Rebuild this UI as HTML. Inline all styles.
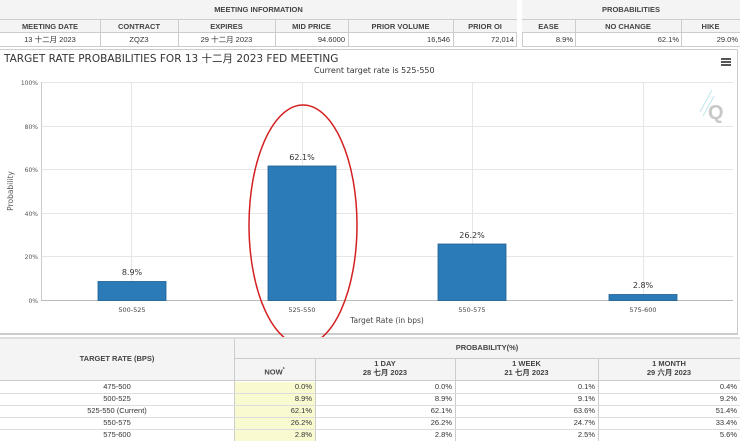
<!DOCTYPE html>
<html><head><meta charset="utf-8"><style>
*{margin:0;padding:0;box-sizing:border-box}
body{width:740px;height:441px;overflow:hidden;background:#fff;font-family:"Liberation Sans","Noto Sans CJK SC",sans-serif;color:#333;position:relative}
.a{position:absolute}
.c{position:absolute;font-size:7.5px;line-height:12px;white-space:nowrap}
.b{font-weight:bold;color:#444}
</style></head><body>
<!-- top tables -->
<div class="a" style="left:0;top:0;width:517px;height:47px;border-right:1px solid #ccc;border-bottom:1px solid #ccc"></div>
<div class="a" style="left:0;top:0;width:517px;height:20px;background:#f4f4f4;border-bottom:1px solid #ccc"></div>
<div class="a" style="left:0;top:20px;width:517px;height:13px;background:#f4f4f4;border-bottom:1px solid #ccc"></div>
<div class="a" style="left:522px;top:0;width:218px;height:47px;border-left:1px solid #ccc;border-bottom:1px solid #ccc"></div>
<div class="a" style="left:522px;top:0;width:218px;height:20px;background:#f4f4f4;border-bottom:1px solid #ccc"></div>
<div class="a" style="left:522px;top:20px;width:218px;height:13px;background:#f4f4f4;border-bottom:1px solid #ccc"></div>
<div class="a" style="left:100px;top:20px;width:1px;height:27px;background:#ccc"></div>
<div class="a" style="left:178px;top:20px;width:1px;height:27px;background:#ccc"></div>
<div class="a" style="left:275px;top:20px;width:1px;height:27px;background:#ccc"></div>
<div class="a" style="left:348px;top:20px;width:1px;height:27px;background:#ccc"></div>
<div class="a" style="left:453px;top:20px;width:1px;height:27px;background:#ccc"></div>
<div class="a" style="left:575px;top:20px;width:1px;height:27px;background:#ccc"></div>
<div class="a" style="left:681px;top:20px;width:1px;height:27px;background:#ccc"></div>
<div class="c b" style="left:0;width:517px;top:4px;text-align:center">MEETING INFORMATION</div>
<div class="c b" style="left:522px;width:218px;top:4px;text-align:center">PROBABILITIES</div>
<div class="c b" style="left:0;width:100px;top:21px;text-align:center">MEETING DATE</div>
<div class="c b" style="left:100px;width:78px;top:21px;text-align:center">CONTRACT</div>
<div class="c b" style="left:178px;width:97px;top:21px;text-align:center">EXPIRES</div>
<div class="c b" style="left:275px;width:73px;top:21px;text-align:center">MID PRICE</div>
<div class="c b" style="left:348px;width:105px;top:21px;text-align:center">PRIOR VOLUME</div>
<div class="c b" style="left:453px;width:64px;top:21px;text-align:center">PRIOR OI</div>
<div class="c b" style="left:522px;width:53px;top:21px;text-align:center">EASE</div>
<div class="c b" style="left:575px;width:106px;top:21px;text-align:center">NO CHANGE</div>
<div class="c b" style="left:681px;width:59px;top:21px;text-align:center">HIKE</div>
<div class="c" style="left:0;width:100px;top:34px;text-align:center">13 十二月 2023</div>
<div class="c" style="left:100px;width:78px;top:34px;text-align:center">ZQZ3</div>
<div class="c" style="left:178px;width:97px;top:34px;text-align:center">29 十二月 2023</div>
<div class="c" style="left:275px;width:70px;top:34px;text-align:right">94.6000</div>
<div class="c" style="left:348px;width:102px;top:34px;text-align:right">16,546</div>
<div class="c" style="left:453px;width:61px;top:34px;text-align:right">72,014</div>
<div class="c" style="left:522px;width:51px;top:34px;text-align:right">8.9%</div>
<div class="c" style="left:575px;width:104px;top:34px;text-align:right">62.1%</div>
<div class="c" style="left:681px;width:57px;top:34px;text-align:right">29.0%</div>
<!-- chart panel -->
<div class="a" style="left:0;top:49px;width:738px;height:286px;border:1px solid #ccc;border-left:none;border-bottom:2px solid #ccc"></div>
<div class="a" style="left:4px;top:51px;font-size:10.5px;font-family:'DejaVu Sans','Noto Sans CJK SC',sans-serif;color:#333;white-space:nowrap">TARGET RATE PROBABILITIES FOR 13 十二月 2023 FED MEETING</div>
<div class="a" style="left:314px;top:66px;font-size:8px;font-family:'DejaVu Sans',sans-serif;color:#333;white-space:nowrap">Current target rate is 525-550</div>
<div class="a" style="left:721px;top:58px;width:10px;height:2px;background:#555;box-shadow:0 3px 0 #555,0 6px 0 #555"></div>
<svg class="a" style="left:0;top:0" width="740" height="441" font-family="DejaVu Sans,sans-serif">
<g stroke="#e6e6e6" stroke-width="1">
<line x1="41" y1="82.5" x2="733" y2="82.5"/><line x1="41" y1="126.5" x2="733" y2="126.5"/><line x1="41" y1="169.5" x2="733" y2="169.5"/><line x1="41" y1="213.5" x2="733" y2="213.5"/><line x1="41" y1="256.5" x2="733" y2="256.5"/>
<line x1="131.5" y1="82" x2="131.5" y2="300"/><line x1="302.5" y1="82" x2="302.5" y2="300"/><line x1="472.5" y1="82" x2="472.5" y2="300"/><line x1="643.5" y1="82" x2="643.5" y2="300"/>
</g>
<line x1="41" y1="300.5" x2="733" y2="300.5" stroke="#bbb"/>
<line x1="41.5" y1="82" x2="41.5" y2="300" stroke="#ccc"/>
<g font-size="6" fill="#555" text-anchor="end"><text x="38" y="85">100%</text><text x="38" y="129">80%</text><text x="38" y="172">60%</text><text x="38" y="216">40%</text><text x="38" y="259">20%</text><text x="38" y="303">0%</text></g>
<text x="13" y="191" font-size="7.5" fill="#555" text-anchor="middle" transform="rotate(-90 13 191)">Probability</text>
<g fill="#2b7bb9" stroke="#1d5f91" stroke-width="0.8">
<rect x="98" y="281.5" width="68" height="19"/><rect x="268" y="166" width="68" height="134.5"/><rect x="438" y="244" width="68" height="56.5"/><rect x="609" y="294.5" width="68" height="6"/></g>
<g font-size="8" fill="#333" text-anchor="middle"><text x="132" y="275">8.9%</text><text x="302" y="160">62.1%</text><text x="472" y="238">26.2%</text><text x="643" y="288">2.8%</text></g>
<g font-size="6.5" fill="#444" text-anchor="middle"><text x="132" y="312">500-525</text><text x="302" y="312">525-550</text><text x="472" y="312">550-575</text><text x="643" y="312">575-600</text></g>
<text x="387" y="323" font-size="7.5" fill="#444" text-anchor="middle">Target Rate (in bps)</text>
<text x="708" y="119" font-size="20" font-weight="bold" fill="#c8c8c8" font-family="Liberation Sans,sans-serif">Q</text>
<g stroke="#bfe6ee" stroke-width="1"><line x1="700" y1="112" x2="712" y2="90"/><line x1="703" y1="116" x2="714" y2="96"/></g>
<ellipse cx="303" cy="225" rx="54" ry="120" fill="none" stroke="#d42020" stroke-width="1.5"/>
</svg>
<!-- bottom table -->
<div class="a" style="left:0;top:337px;width:740px;height:2px;background:#ddd"></div>
<div class="a" style="left:0;top:339px;width:740px;height:42px;background:#f4f4f4;border-bottom:1px solid #ccc"></div>
<div class="a" style="left:234px;top:358px;width:506px;height:1px;background:#ccc"></div>
<div class="a" style="left:234px;top:339px;width:1px;height:102px;background:#ccc"></div>
<div class="a" style="left:315px;top:358px;width:1px;height:83px;background:#ccc"></div>
<div class="a" style="left:455px;top:358px;width:1px;height:83px;background:#ccc"></div>
<div class="a" style="left:598px;top:358px;width:1px;height:83px;background:#ccc"></div>
<div class="a" style="left:235px;top:382px;width:80px;height:59px;background:#fafad0"></div>
<div class="a" style="left:0;top:393px;width:740px;height:1px;background:#ddd"></div>
<div class="a" style="left:0;top:405px;width:740px;height:1px;background:#ddd"></div>
<div class="a" style="left:0;top:417px;width:740px;height:1px;background:#ddd"></div>
<div class="a" style="left:0;top:429px;width:740px;height:1px;background:#ddd"></div>
<div class="c b" style="left:0;width:234px;top:353px;text-align:center">TARGET RATE (BPS)</div>
<div class="c b" style="left:234px;width:506px;top:342px;text-align:center">PROBABILITY(%)</div>
<div class="c b" style="left:234px;width:81px;top:364px;text-align:center">NOW<sup style="font-size:5px">*</sup></div>
<div class="c b" style="left:315px;width:140px;top:359px;text-align:center;line-height:9px">1 DAY<br>28 七月 2023</div>
<div class="c b" style="left:455px;width:143px;top:359px;text-align:center;line-height:9px">1 WEEK<br>21 七月 2023</div>
<div class="c b" style="left:598px;width:142px;top:359px;text-align:center;line-height:9px">1 MONTH<br>29 六月 2023</div>
<div class="c" style="left:0;width:234px;top:381px;text-align:center;line-height:12px">475-500<br>500-525<br>525-550 (Current)<br>550-575<br>575-600</div>
<div class="c" style="left:234px;width:78px;top:381px;text-align:right">0.0%<br>8.9%<br>62.1%<br>26.2%<br>2.8%</div>
<div class="c" style="left:315px;width:137px;top:381px;text-align:right">0.0%<br>8.9%<br>62.1%<br>26.2%<br>2.8%</div>
<div class="c" style="left:455px;width:140px;top:381px;text-align:right">0.1%<br>9.1%<br>63.6%<br>24.7%<br>2.5%</div>
<div class="c" style="left:598px;width:139px;top:381px;text-align:right">0.4%<br>9.2%<br>51.4%<br>33.4%<br>5.6%</div>
</body></html>
